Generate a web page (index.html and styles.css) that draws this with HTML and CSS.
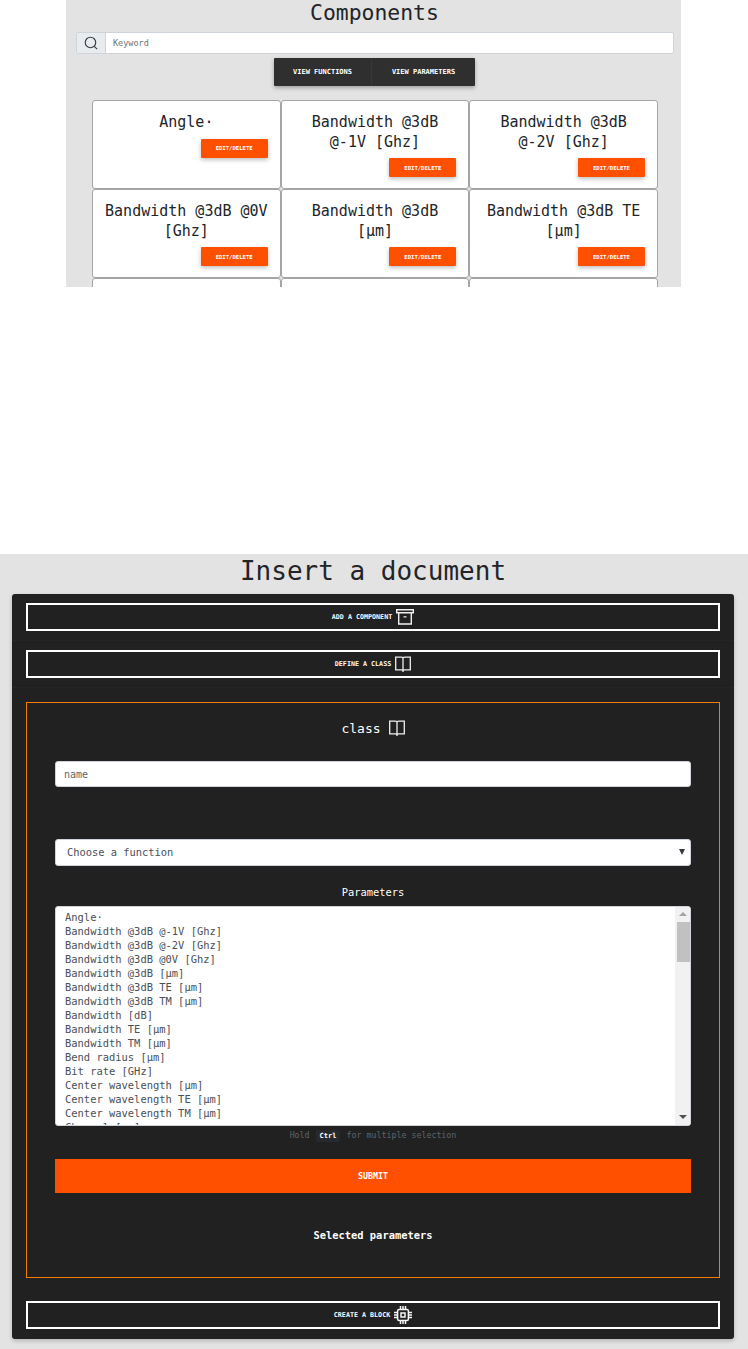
FILE: index.html
```html
<!DOCTYPE html>
<html lang="en">
<head>
<meta charset="utf-8">
<title>Components</title>
<link rel="stylesheet" href="styles.css">
</head>
<body>
<section class="browser">
  <h2 class="browser-title">Components</h2>
  <div class="search">
    <span class="search-icon">
      <svg width="14" height="14" viewBox="0 0 16 16" fill="none" stroke="#343a40" stroke-width="1.3"><circle cx="7.4" cy="7.4" r="6"/><path d="M11.8 11.8 15 15"/></svg>
    </span>
    <input class="search-input" type="text" placeholder="Keyword">
  </div>
  <div class="toggle">
    <button class="toggle-btn" type="button">View functions</button>
    <button class="toggle-btn" type="button">View parameters</button>
  </div>
  <div class="cards">
    <div class="card"><p class="card-name">Angle·</p><button class="edit" type="button">Edit/Delete</button></div>
    <div class="card"><p class="card-name">Bandwidth @3dB @-1V [Ghz]</p><button class="edit" type="button">Edit/Delete</button></div>
    <div class="card"><p class="card-name">Bandwidth @3dB @-2V [Ghz]</p><button class="edit" type="button">Edit/Delete</button></div>
    <div class="card"><p class="card-name">Bandwidth @3dB @0V [Ghz]</p><button class="edit" type="button">Edit/Delete</button></div>
    <div class="card"><p class="card-name">Bandwidth @3dB [µm]</p><button class="edit" type="button">Edit/Delete</button></div>
    <div class="card"><p class="card-name">Bandwidth @3dB TE [µm]</p><button class="edit" type="button">Edit/Delete</button></div>
    <div class="card"></div>
    <div class="card"></div>
    <div class="card"></div>
  </div>
</section>

<section class="insert">
  <h1 class="insert-title">Insert a document</h1>
  <div class="panel">
    <div class="panel-row">
      <button class="outline" type="button">Add a component
        <svg class="outline-icon" width="18" height="16" viewBox="0 0 18 16" fill="none" stroke="#f0f0f0" stroke-width="1.4"><path d="M.7.7h16.600v3H.7zM2.700 3.700V15h12.600V3.700"/><path d="M7.500 7.800h3" stroke-width="1.600" stroke="#bdbdbd"/></svg>
      </button>
    </div>
    <div class="panel-row">
      <button class="outline" type="button">Define a class
        <svg class="outline-icon" width="16" height="16" viewBox="0 0 16 16" fill="none" stroke="#f0f0f0" stroke-width="1.300"><path d="M.7 1.200h5.800c.8 0 1.500.5 1.500 1.300 0-.8.7-1.300 1.500-1.300h5.800v12.600H9.500c-.8 0-1.500.3-1.500 1 0-.7-.7-1-1.500-1H.7zM8 2.500V16"/></svg>
      </button>
    </div>
    <form class="class-box">
      <h3 class="class-title">class
        <svg class="class-icon" width="16" height="16" viewBox="0 0 16 16" fill="none" stroke="#f0f0f0" stroke-width="1.300"><path d="M.7 1.200h5.800c.8 0 1.500.5 1.500 1.300 0-.8.7-1.300 1.500-1.300h5.800v12.600H9.500c-.8 0-1.500.3-1.500 1 0-.7-.7-1-1.500-1H.7zM8 2.500V16"/></svg>
      </h3>
      <input class="name" type="text" placeholder="name">
      <div class="fake-select">Choose a function<span class="caret"></span></div>
      <label class="params-label">Parameters</label>
      <div class="listbox">
        <ul class="options">
          <li>Angle·</li>
          <li>Bandwidth @3dB @-1V [Ghz]</li>
          <li>Bandwidth @3dB @-2V [Ghz]</li>
          <li>Bandwidth @3dB @0V [Ghz]</li>
          <li>Bandwidth @3dB [µm]</li>
          <li>Bandwidth @3dB TE [µm]</li>
          <li>Bandwidth @3dB TM [µm]</li>
          <li>Bandwidth [dB]</li>
          <li>Bandwidth TE [µm]</li>
          <li>Bandwidth TM [µm]</li>
          <li>Bend radius [µm]</li>
          <li>Bit rate [GHz]</li>
          <li>Center wavelength [µm]</li>
          <li>Center wavelength TE [µm]</li>
          <li>Center wavelength TM [µm]</li>
          <li>Channel [nm]</li>
        </ul>
        <div class="scrollbar">
          <span class="arrow arrow-up"></span>
          <span class="track"><span class="thumb"></span></span>
          <span class="arrow arrow-down"></span>
        </div>
      </div>
      <p class="hint">Hold <kbd class="key">Ctrl</kbd> for multiple selection</p>
      <button class="submit" type="button">Submit</button>
      <p class="selected">Selected parameters</p>
    </form>
    <div class="panel-row panel-row-last">
      <button class="outline" type="button">Create a block
        <svg class="outline-icon" width="18" height="18" viewBox="0 0 18 18" fill="none" stroke="#f5f5f5" stroke-width="1.500"><rect x="3.600" y="3.600" width="10.800" height="10.800" rx="1.500"/><rect x="7" y="7" width="4" height="4"/><path d="M6.500 0v3M9 0v3M11.500 0v3M6.500 15v3M9 15v3M11.500 15v3M0 6.500h3M0 9h3M0 11.500h3M15 6.500h3M15 9h3M15 11.500h3"/></svg>
      </button>
    </div>
  </div>
</section>
</body>
</html>
```
FILE: styles.css
```css
* { box-sizing: border-box; }
html, body { margin: 0; padding: 0; }
body {
  width: 748px;
  height: 1349px;
  overflow: hidden;
  background: #fff;
  font-family: "DejaVu Sans Mono", "Liberation Mono", monospace;
  color: #212529;
}
button { font-family: inherit; cursor: pointer; }

.browser {
  width: 615px;
  height: 287px;
  margin-left: 66px;
  background: #e3e3e3;
  overflow: hidden;
}
.browser-title {
  margin: 0;
  height: 32px;
  padding-left: 2px;
  font-size: 21.4px;
  line-height: 25px;
  font-weight: 400;
  text-align: center;
}
.search {
  display: flex;
  width: 598px;
  height: 22px;
  margin-left: 10px;
  border: 1px solid #ced4da;
  border-radius: 2px;
  background: #fff;
}
.search-icon {
  flex: 0 0 29px;
  display: flex;
  align-items: center;
  justify-content: center;
  background: #e9ecef;
  border-right: 1px solid #ced4da;
}
.search-input {
  flex: 1;
  min-width: 0;
  border: 0;
  padding: 0 7px;
  font: 8.500px "DejaVu Sans Mono", monospace;
  background: transparent;
}
.search-input::placeholder { color: #6c757d; opacity: 1; }
.toggle {
  display: grid;
  grid-template-columns: 97px 104px;
  width: 201px;
  height: 28px;
  margin: 4px 0 0 208px;
  background: #2f2f2f;
  box-shadow: 0 2px 4px rgba(0, 0, 0, .3);
  border-radius: 1px;
}
.toggle-btn {
  border: 0;
  padding: 0;
  background: transparent;
  color: #fff;
  font-size: 7px;
  font-weight: 700;
  text-transform: uppercase;
}
.toggle-btn + .toggle-btn { border-left: 1px solid #383838; }
.cards {
  display: grid;
  grid-template-columns: repeat(3, 188.670px);
  grid-auto-rows: 89px;
  margin: 14px 0 0 26px;
}
.card {
  display: flex;
  flex-direction: column;
  padding: 12px 12px 0;
  background: #fff;
  border: 1px solid #a5a5a5;
  border-radius: 3px;
}
.card-name {
  margin: 0;
  font-size: 15px;
  line-height: 19.500px;
  text-align: center;
  color: #212529;
}
.edit {
  align-self: flex-end;
  width: 67px;
  height: 19px;
  margin-top: 6px;
  border: 0;
  padding: 0;
  background: #ff5000;
  color: #fff;
  font-size: 5.600px;
  font-weight: 700;
  text-transform: uppercase;
  border-radius: 1px;
  box-shadow: 0 2px 4px rgba(0, 0, 0, .25);
}

.insert {
  height: 795px;
  margin-top: 267px;
  background: #e3e3e3;
  padding: 0 14px 0 12px;
}
.insert-title {
  margin: 0;
  height: 40px;
  font-size: 26px;
  line-height: 34px;
  font-weight: 400;
  text-align: center;
}
.panel {
  height: 745px;
  background: #212121;
  border-radius: 3px;
  box-shadow: 0 2px 4px rgba(0, 0, 0, .2);
}
.panel-row {
  height: 47px;
  padding: 9px 14px 0;
  border-bottom: 1px solid #262626;
}
.panel-row-last { border-bottom: 0; margin-top: 14px; }
.outline {
  display: flex;
  align-items: center;
  justify-content: center;
  gap: 4px;
  width: 100%;
  height: 28px;
  padding: 0;
  border: 2px solid #fff;
  background: transparent;
  color: #fff;
  font-size: 6.700px;
  font-weight: 700;
  text-transform: uppercase;
}
.class-box {
  display: flex;
  flex-direction: column;
  height: 576px;
  margin: 14px 14px 0;
  padding: 0 28px;
  border: 1px solid #f57c00;
}
.class-title {
  display: flex;
  align-items: center;
  justify-content: center;
  gap: 8px;
  height: 18px;
  margin: 16px 0 0;
  color: #fff;
  font-size: 13px;
  font-weight: 400;
}
.name {
  height: 26px;
  margin-top: 24px;
  padding: 0 8px;
  border: 1px solid #ced4da;
  border-radius: 3px;
  background: #fff;
  font: 10px "DejaVu Sans Mono", monospace;
}
.name::placeholder { color: #5f666d; opacity: 1; }
.fake-select {
  position: relative;
  height: 27px;
  margin-top: 52px;
  padding-left: 11px;
  border: 1px solid #ced4da;
  border-radius: 3px;
  background: #fff;
  color: #495057;
  font-size: 10.400px;
  line-height: 25px;
}
.caret {
  position: absolute;
  right: 5px;
  top: 9px;
  border-left: 3px solid transparent;
  border-right: 3px solid transparent;
  border-top: 6px solid #343a40;
}
.params-label {
  display: block;
  height: 12px;
  margin-top: 20px;
  color: #fff;
  font-size: 10.400px;
  line-height: 12px;
  text-align: center;
}
.listbox {
  display: flex;
  height: 220px;
  margin-top: 8px;
  border: 1px solid #ced4da;
  border-radius: 3px;
  background: #fff;
  overflow: hidden;
}
.options {
  flex: 1;
  margin: 0;
  padding: 3px 9px 0;
  list-style: none;
  color: #495057;
  font-size: 10.450px;
  line-height: 14px;
  overflow: hidden;
}
.scrollbar {
  flex: 0 0 15px;
  display: flex;
  flex-direction: column;
  background: #f1f1f1;
}
.arrow {
  display: flex;
  align-self: center;
  margin-top: 5px;
  width: 0;
  height: 0;
  border-left: 4px solid transparent;
  border-right: 4px solid transparent;
}
.arrow-up { border-bottom: 4px solid #a3a3a3; flex: 0 0 4px; margin-bottom: 6px; }
.arrow-down { border-top: 4px solid #505050; flex: 0 0 4px; margin: 0 0 6px; }
.track { flex: 1; padding-left: 2px; }
.thumb { display: block; width: 13px; height: 40px; background: #c1c1c1; }
.hint {
  height: 12px;
  margin: 4px 0 0;
  color: #5d656c;
  font-size: 8.300px;
  line-height: 11px;
  text-align: center;
}
.key {
  margin: 0 1px;
  padding: 2px 4px;
  border-radius: 2px;
  background: #262a2e;
  color: #fff;
  font-family: inherit;
  font-size: 7px;
  font-weight: 700;
}
.submit {
  height: 34px;
  margin-top: 17px;
  border: 0;
  padding: 0;
  background: #ff5000;
  color: #fff;
  font-size: 8.300px;
  font-weight: 700;
  text-transform: uppercase;
}
.selected {
  margin: 36px 0 0;
  color: #fff;
  font-size: 10.400px;
  font-weight: 700;
  line-height: 12px;
  text-align: center;
}
```
